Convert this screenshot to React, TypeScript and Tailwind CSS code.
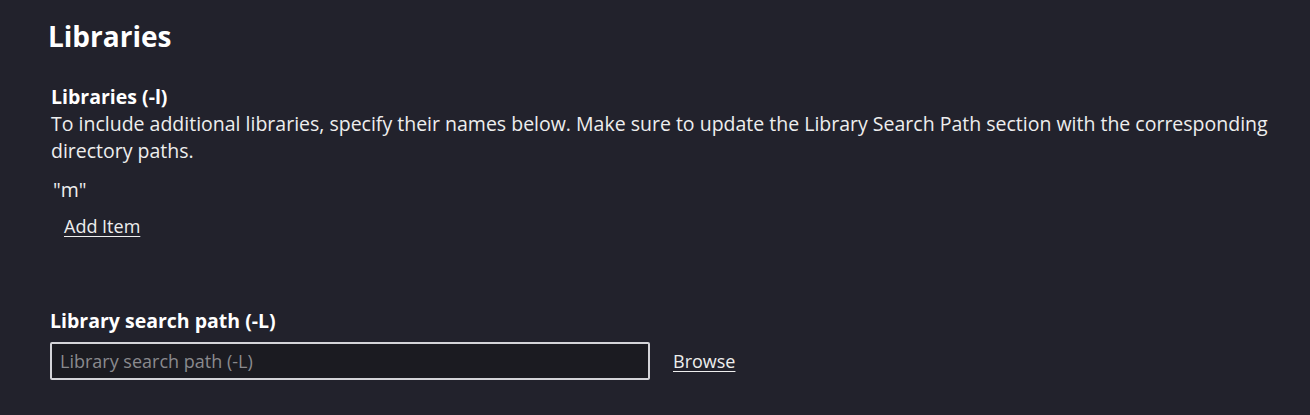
export default function App() {
  return (
    <div
      className="h-[415px] w-full overflow-hidden bg-[#22222c] text-[#eeeeee]"
      style={{ fontFamily: '"Open Sans", sans-serif' }}
    >
      <div className="pl-[48px] pr-[40px] pt-[17px]">
        <h1 className="text-[28px] font-bold leading-[38px] text-white">Libraries</h1>

        <div className="mt-[28px] pl-[3px]">
          <div className="text-[19.5px] font-bold leading-[27px] text-white">Libraries (-l)</div>
          <p className="text-[19.5px] leading-[27px]">
            To include additional libraries, specify their names below. Make sure to update the Library Search Path
            section with the corresponding directory paths.
          </p>
          <div className="mt-[13px] pl-[2px] text-[19.5px] leading-[26px]">"m"</div>
          <button className="mt-[10px] ml-[13px] block text-[18px] leading-[26px] underline underline-offset-[3px]">
            Add Item
          </button>
        </div>

        <div className="mt-[68px] pl-[2px]">
          <div className="text-[19.5px] font-bold leading-[27px] text-white">Library search path (-L)</div>
          <div className="mt-[8px] flex items-center gap-[23px]">
            <input
              className="h-[38px] w-[600px] rounded-[2px] border-2 border-[#d4d4d8] bg-[#1b1b21] px-[8px] text-[18px] text-white placeholder-[#8a8a8e] outline-none"
              placeholder="Library search path (-L)"
            />
            <button className="text-[18px] underline underline-offset-[3px]">Browse</button>
          </div>
        </div>
      </div>
    </div>
  );
}
